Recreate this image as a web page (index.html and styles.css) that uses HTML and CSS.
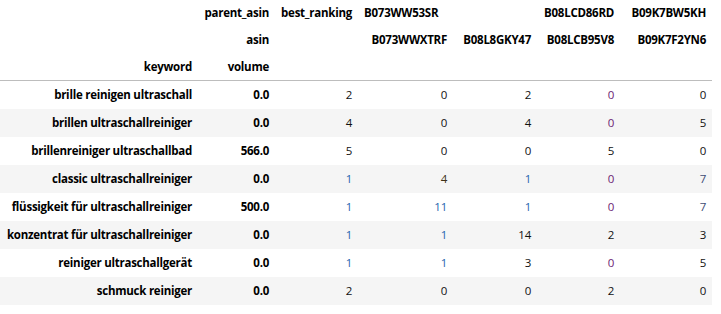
FILE: index.html
```html
<!DOCTYPE html>
<html>
<head>
<meta charset="utf-8">
<link rel="stylesheet" href="styles.css">
</head>
<body>
<table class="df">
  <colgroup>
    <col class="w1"><col class="w2"><col class="w3"><col class="w4"><col class="w5"><col class="w6"><col class="w7">
  </colgroup>
  <thead>
    <tr>
      <th></th>
      <th>parent_asin</th>
      <th>best_ranking</th>
      <th colspan="2" class="left">B073WW53SR</th>
      <th>B08LCD86RD</th>
      <th>B09K7BW5KH</th>
    </tr>
    <tr>
      <th></th>
      <th>asin</th>
      <th></th>
      <th>B073WWXTRF</th>
      <th>B08L8GKY47</th>
      <th>B08LCB95V8</th>
      <th>B09K7F2YN6</th>
    </tr>
    <tr class="last">
      <th>keyword</th>
      <th>volume</th>
      <th></th><th></th><th></th><th></th><th></th>
    </tr>
  </thead>
  <tbody>
    <tr><th>brille reinigen ultraschall</th><th>0.0</th><td>2</td><td>0</td><td>2</td><td class="purple">0</td><td>0</td></tr>
    <tr><th>brillen ultraschallreiniger</th><th>0.0</th><td>4</td><td>0</td><td>4</td><td class="purple">0</td><td>5</td></tr>
    <tr><th>brillenreiniger ultraschallbad</th><th>566.0</th><td>5</td><td>0</td><td>0</td><td>5</td><td>0</td></tr>
    <tr><th>classic ultraschallreiniger</th><th>0.0</th><td class="blue">1</td><td class="brown">4</td><td class="blue">1</td><td class="purple">0</td><td class="slate">7</td></tr>
    <tr><th>flüssigkeit für ultraschallreiniger</th><th>500.0</th><td class="blue">1</td><td class="blue">11</td><td class="blue">1</td><td class="purple">0</td><td class="slate">7</td></tr>
    <tr><th>konzentrat für ultraschallreiniger</th><th>0.0</th><td class="blue">1</td><td class="blue">1</td><td>14</td><td>2</td><td>3</td></tr>
    <tr><th>reiniger ultraschallgerät</th><th>0.0</th><td class="blue">1</td><td class="blue">1</td><td>3</td><td class="purple">0</td><td>5</td></tr>
    <tr><th>schmuck reiniger</th><th>0.0</th><td>2</td><td>0</td><td>0</td><td>2</td><td>0</td></tr>
  </tbody>
</table>
</body>
</html>
```
FILE: styles.css
```css
html, body {
  margin: 0;
  padding: 0;
  background: #ffffff;
}
body {
  font-family: "Open Sans", "Noto Sans", sans-serif;
  font-size: 11.5px;
  letter-spacing: -0.25px;
  color: #000000;
}
.df {
  border-collapse: collapse;
  border-spacing: 0;
  table-layout: fixed;
  width: 712px;
  margin-top: -1px;
}
.w1 { width: 198px; }
.w2 { width: 77px; }
.w3 { width: 83px; }
.w4 { width: 95px; }
.w5 { width: 84px; }
.w6 { width: 83px; }
.w7 { width: 92px; }
.df th, .df td {
  text-align: right;
  white-space: nowrap;
  line-height: 16px;
  padding: 6px 6px;
  vertical-align: middle;
  overflow: visible;
}
.df thead th {
  font-weight: bold;
  padding: 5.5px 6px;
}
.df thead th.left {
  text-align: left;
}
.df thead tr.last th {
  border-bottom: 1px solid #bdbdbd;
}
.df tbody th {
  font-weight: bold;
}
.df td {
  font-weight: normal;
  color: #111111;
}
.df tbody tr:nth-child(even) {
  background: #f5f5f5;
}
.df td.blue { color: #2465ad; }
.df td.purple { color: #6b1d72; }
.df td.slate { color: #3f4d75; }
.df td.brown { color: #3d3218; }
```
